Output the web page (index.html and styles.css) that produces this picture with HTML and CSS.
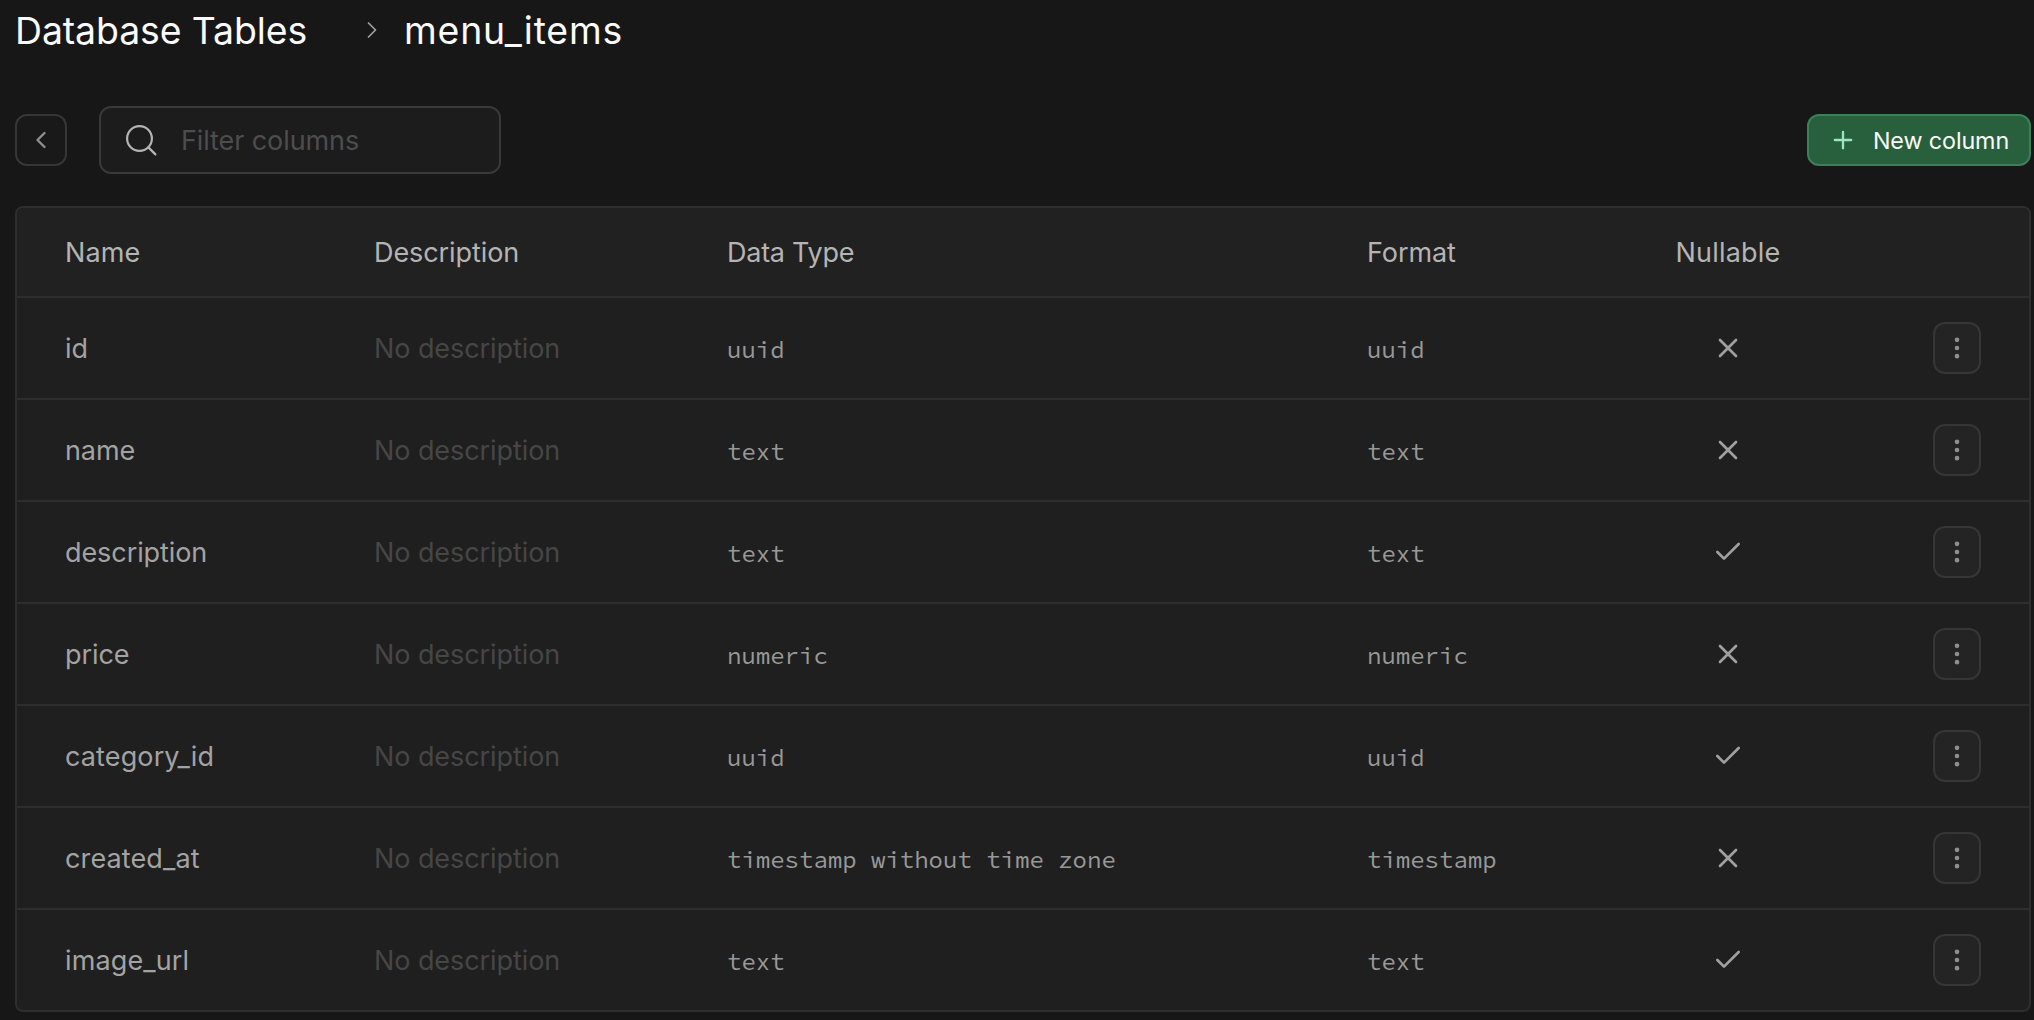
FILE: index.html
```html
<!DOCTYPE html>
<html lang="en">
<head>
<meta charset="utf-8">
<title>Database Tables</title>
<link rel="stylesheet" href="styles.css">
</head>
<body>
<svg class="sprite" aria-hidden="true">
  <symbol id="x" viewBox="0 0 24 24"><path d="M18 6 6 18M6 6l12 12"/></symbol>
  <symbol id="check" viewBox="0 0 24 24"><path d="M20 6 9 17l-5-5"/></symbol>
  <symbol id="dots" viewBox="0 0 24 24"><circle cx="12" cy="5" r="1"/><circle cx="12" cy="12" r="1"/><circle cx="12" cy="19" r="1"/></symbol>
</svg>
<main class="page">
  <header class="crumbs">
    <h1 class="crumb root">Database Tables</h1>
    <svg class="icon chevron" viewBox="0 0 24 24"><path d="m9 18 6-6-6-6"/></svg>
    <h1 class="crumb current">menu_items</h1>
  </header>

  <div class="toolbar">
    <button class="back" aria-label="Back"><svg class="icon" viewBox="0 0 24 24"><path d="m15 18-6-6 6-6"/></svg></button>
    <div class="filter">
      <svg class="search" viewBox="0 0 32 32"><circle cx="14.5" cy="14.5" r="12.4"/><path d="m23.4 23.4 7 7"/></svg>
      <span class="placeholder">Filter columns</span>
    </div>
    <button class="new"><svg class="icon" viewBox="0 0 24 24"><path d="M5 12h14M12 5v14"/></svg><span class="label">New column</span></button>
  </div>

  <section class="table">
    <div class="row head"><span class="first">Name</span><span>Description</span><span class="type">Data Type</span><span>Format</span><span class="null">Nullable</span><span></span></div>
    <div class="row"><span class="name">id</span><span class="none">No description</span><code>uuid</code><code>uuid</code><svg class="mark"><use href="#x"/></svg><button class="more"><svg class="icon"><use href="#dots"/></svg></button></div>
    <div class="row"><span class="name">name</span><span class="none">No description</span><code>text</code><code>text</code><svg class="mark"><use href="#x"/></svg><button class="more"><svg class="icon"><use href="#dots"/></svg></button></div>
    <div class="row"><span class="name">description</span><span class="none">No description</span><code>text</code><code>text</code><svg class="mark"><use href="#check"/></svg><button class="more"><svg class="icon"><use href="#dots"/></svg></button></div>
    <div class="row"><span class="name">price</span><span class="none">No description</span><code>numeric</code><code>numeric</code><svg class="mark"><use href="#x"/></svg><button class="more"><svg class="icon"><use href="#dots"/></svg></button></div>
    <div class="row"><span class="name snake">category_id</span><span class="none">No description</span><code>uuid</code><code>uuid</code><svg class="mark"><use href="#check"/></svg><button class="more"><svg class="icon"><use href="#dots"/></svg></button></div>
    <div class="row"><span class="name snake">created_at</span><span class="none">No description</span><code>timestamp without time zone</code><code>timestamp</code><svg class="mark"><use href="#x"/></svg><button class="more"><svg class="icon"><use href="#dots"/></svg></button></div>
    <div class="row"><span class="name snake">image_url</span><span class="none">No description</span><code>text</code><code>text</code><svg class="mark"><use href="#check"/></svg><button class="more"><svg class="icon"><use href="#dots"/></svg></button></div>
  </section>
</main>
</body>
</html>
```
FILE: styles.css
```css
* { box-sizing: border-box; }
body {
  margin: 0;
  background: #171717;
  color: #fafafa;
  font: 27px/36px Inter, "Liberation Sans", sans-serif;
}
.sprite { position: absolute; width: 0; height: 0; }
svg { fill: none; stroke: currentColor; stroke-width: 2; stroke-linecap: round; stroke-linejoin: round; flex: none; }
.icon { width: 28px; height: 28px; }
button { padding: 0; font: inherit; display: flex; align-items: center; justify-content: center; border-radius: 12px; }

.page { width: 2031px; height: 1020px; padding-left: 15px; overflow: hidden; }

.crumbs { display: flex; align-items: center; height: 60px; }
.crumb { margin: 0; padding-top: 2px; font-size: 37.4px; line-height: 48px; font-weight: 420; letter-spacing: -.1px; }
.root { width: 342px; }
.crumb.current { margin-left: 18px; letter-spacing: .8px; }
.chevron { margin-left: 1px; color: #a0a0a0; stroke-width: 1.5; }

.toolbar { display: flex; align-items: center; height: 68px; margin-top: 46px; }
.back { width: 52px; height: 52px; border: 2px solid #363636; background: #191919; color: #8f8f8f; }
.filter {
  display: flex; align-items: center; gap: 24px;
  width: 402px; height: 68px; margin-left: 32px; padding-left: 24px;
  border: 2px solid #393939; border-radius: 12px; background: #1c1c1c; color: #4d4d4d;
}
.placeholder { padding-top: 2px; letter-spacing: -.1px; }
.search { width: 32px; height: 32px; color: #b4b4b4; stroke-width: 2.2; }
.new {
  gap: 16px; width: 224px; height: 52px; margin-left: auto;
  border: 2px solid #3a8158; background: #285f3d; color: #fafafa; font-size: 23.3px;
}
.new .icon { color: #9ae6bf; }
.label { padding-top: 2px; letter-spacing: -.1px; }

.table { margin-top: 32px; border: 2px solid #2e2e2e; border-radius: 8px; background: #1f1f1f; overflow: hidden; }
.row {
  display: grid; align-items: center; height: 102px; padding-left: 48px;
  grid-template-columns: 309px 353px 640px 281px 160px 1fr;
  border-bottom: 2px solid #2e2e2e; white-space: nowrap;
}
.row:last-child { height: 100px; border-bottom: 0; }
.row > span { padding-top: 2px; letter-spacing: -.08px; }
.head { height: 90px; background: #212121; color: #b4b4b4; }
.row > .first { letter-spacing: .1px; }
.row > .type { letter-spacing: -.25px; }
.row > .null { text-align: center; letter-spacing: .2px; }
.name { color: #a3a3a3; }
.row > .snake { letter-spacing: .12px; }
.none { color: #464646; }
code { padding-top: 4px; color: #989898; font: 24px/36px "Source Code Pro", "Liberation Mono", monospace; }
.mark { width: 32px; height: 32px; justify-self: center; color: #a0a0a0; }
.more { width: 48px; height: 52px; justify-self: end; margin-right: 48px; border: 2px solid #363636; background: #242424; color: #8f8f8f; }
```
